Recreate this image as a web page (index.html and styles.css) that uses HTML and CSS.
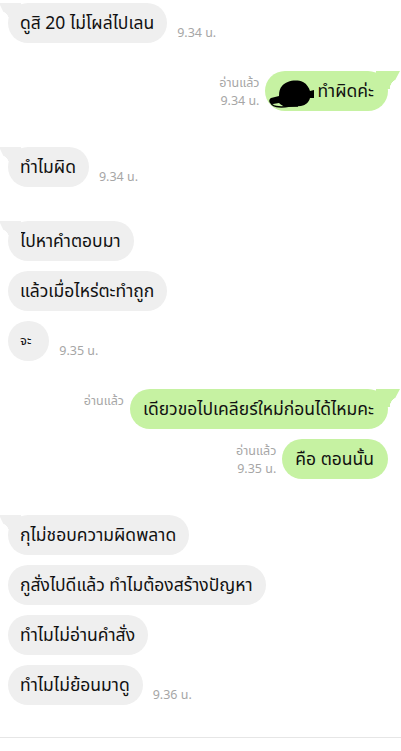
FILE: index.html
```html
<!DOCTYPE html>
<html lang="th">
<head>
<meta charset="utf-8">
<title>Chat</title>
<link rel="stylesheet" href="styles.css">
</head>
<body>
<div class="chat">
  <div class="row in first">
    <div class="bubble tail">ดูสิ 20 ไม่โผล่ไปเลน</div>
    <div class="meta"><span>9.34 น.</span></div>
  </div>

  <div class="row out gap-m">
    <div class="meta"><span>อ่านแล้ว</span><span>9.34 น.</span></div>
    <div class="bubble tail"><svg class="scribble" width="48" height="30" viewBox="0 0 48 30"><path d="M14 7 C18 2 28 0 35 3 C39 5 41 9 42 12 L46 11 L46 19 L42 19 C41 23 38 26 33 27 L20 28 C16 28 13 26 11 24 L5 25 C1 25 0 21 3 19 L11 17 C11 12 12 9 14 7 Z" fill="#000"/><path d="M3 22 C2 28 12 29 22 27 L30 27" stroke="#000" stroke-width="1.6" fill="none"/></svg>ทำผิดค่ะ</div>
  </div>

  <div class="row in gap-l">
    <div class="bubble tail">ทำไมผิด</div>
    <div class="meta"><span>9.34 น.</span></div>
  </div>

  <div class="row in gap-l2">
    <div class="bubble tail">ไปหาคำตอบมา</div>
  </div>
  <div class="row in gap-s">
    <div class="bubble">แล้วเมื่อไหร่ตะทำถูก</div>
  </div>
  <div class="row in gap-s">
    <div class="bubble small">จะ</div>
    <div class="meta"><span>9.35 น.</span></div>
  </div>

  <div class="row out gap-m">
    <div class="meta"><span>อ่านแล้ว</span><span>&nbsp;</span></div>
    <div class="bubble tail">เดียวขอไปเคลียร์ใหม่ก่อนได้ไหมคะ</div>
  </div>
  <div class="row out gap-s">
    <div class="meta"><span>อ่านแล้ว</span><span>9.35 น.</span></div>
    <div class="bubble">คือ ตอนนั้น</div>
  </div>

  <div class="row in gap-l">
    <div class="bubble tail">กุไม่ชอบความผิดพลาด</div>
  </div>
  <div class="row in gap-s">
    <div class="bubble">กูสั่งไปดีแล้ว ทำไมต้องสร้างปัญหา</div>
  </div>
  <div class="row in gap-s">
    <div class="bubble">ทำไมไม่อ่านคำสั่ง</div>
  </div>
  <div class="row in gap-s">
    <div class="bubble">ทำไมไม่ย้อนมาดู</div>
    <div class="meta"><span>9.36 น.</span></div>
  </div>
</div>
<div class="footer"></div>
</body>
</html>
```
FILE: styles.css
```css
html, body {
  margin: 0;
  padding: 0;
  background: #ffffff;
}
body {
  font-family: Tahoma, "Noto Sans Thai", "Noto Sans", "DejaVu Sans", sans-serif;
  color: #111111;
  width: 401px;
  height: 751px;
  overflow: hidden;
}
.chat {
  display: flex;
  flex-direction: column;
  height: 737px;
  box-sizing: border-box;
  padding-top: 3px;
}
.row {
  display: flex;
  align-items: flex-end;
}
.row.in {
  padding-left: 8px;
}
.row.out {
  justify-content: flex-end;
  padding-right: 13px;
}
.gap-s { margin-top: 10px; }
.gap-m { margin-top: 28px; }
.gap-l { margin-top: 36px; }
.gap-l2 { margin-top: 34px; }
.bubble {
  position: relative;
  height: 40px;
  display: flex;
  align-items: center;
  padding: 0 13px 0 12px;
  border-radius: 20px;
  font-size: 17.5px;
  white-space: nowrap;
  background: #efefef;
}
.bubble.small {
  font-size: 13px;
  padding: 0 18px 0 12px;
}
.out .bubble {
  background: #c6f2a2;
  padding: 0 14px 0 13px;
}
.in .bubble.tail::before {
  content: "";
  position: absolute;
  left: -9px;
  top: 0;
  width: 22px;
  height: 18px;
  background: radial-gradient(circle at 0 100%, transparent 10px, #efefef 10.5px);
  clip-path: polygon(0 0, 100% 0, 100% 100%, 40% 100%);
}
.out .bubble.tail::after {
  content: "";
  position: absolute;
  right: -12px;
  top: 0;
  width: 24px;
  height: 18px;
  background: radial-gradient(circle at 100% 100%, transparent 10px, #c6f2a2 10.5px);
  clip-path: polygon(0 0, 100% 0, 60% 100%, 0 100%);
}
.scribble {
  margin-left: -10px;
  margin-right: 1px;
  margin-top: 6px;
}
.meta {
  display: flex;
  flex-direction: column;
  font-size: 12.5px;
  line-height: 18px;
  color: #a6a6a6;
}
.in .meta {
  margin-left: 10px;
}
.out .meta {
  margin-right: 6px;
  align-items: flex-end;
}
.footer {
  border-top: 1px solid #e6e6e6;
  height: 13px;
}
```
